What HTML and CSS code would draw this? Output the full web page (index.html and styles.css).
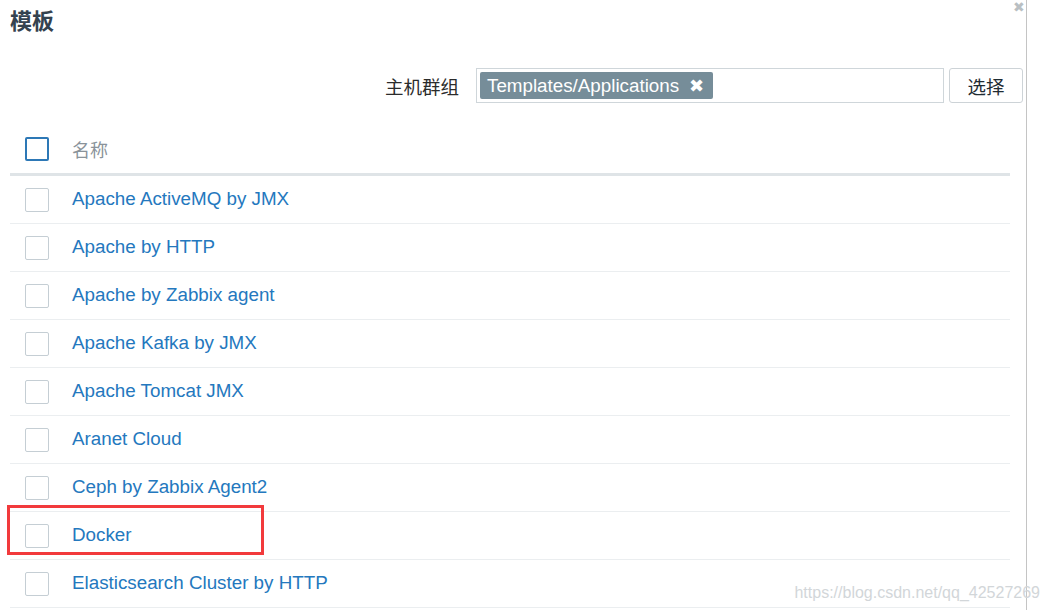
FILE: index.html
```html
<!DOCTYPE html>
<html lang="zh">
<head>
<meta charset="utf-8">
<title>模板</title>
<link rel="stylesheet" href="styles.css">
</head>
<body>
<div class="page">
  <div class="dialog">
    <span class="close">&#x2716;</span>
    <h1 class="title">模板</h1>

    <div class="filter">
      <label class="filter-label">主机群组</label>
      <div class="multiselect">
        <span class="tag">Templates/Applications <span class="tag-x">&#x2716;</span></span>
      </div>
      <button class="btn">选择</button>
    </div>

    <div class="list">
      <div class="row head">
        <span class="check check-head"></span>
        <span class="head-name">名称</span>
      </div>
      <div class="row"><span class="check"></span><a class="link">Apache ActiveMQ by JMX</a></div>
      <div class="row"><span class="check"></span><a class="link">Apache by HTTP</a></div>
      <div class="row"><span class="check"></span><a class="link">Apache by Zabbix agent</a></div>
      <div class="row"><span class="check"></span><a class="link">Apache Kafka by JMX</a></div>
      <div class="row"><span class="check"></span><a class="link">Apache Tomcat JMX</a></div>
      <div class="row"><span class="check"></span><a class="link">Aranet Cloud</a></div>
      <div class="row"><span class="check"></span><a class="link">Ceph by Zabbix Agent2</a></div>
      <div class="row marked"><span class="check"></span><a class="link">Docker</a><span class="highlight"></span></div>
      <div class="row"><span class="check"></span><a class="link">Elasticsearch Cluster by HTTP</a></div>
    </div>
  </div>

  <span class="watermark">https://blog.csdn.net/qq_42527269</span>
</div>
</body>
</html>
```

FILE: styles.css
```css
html, body {
  margin: 0;
  padding: 0;
  background: #ffffff;
}

body {
  font-family: "Liberation Sans", Arial, "Noto Sans CJK SC", sans-serif;
  overflow: hidden;
}

.page {
  position: relative;
  width: 1049px;
  height: 610px;
  overflow: hidden;
}

.dialog {
  position: relative;
  width: 1027px;
  height: 610px;
  border-right: 1px solid #c4c4c4;
  box-sizing: border-box;
  overflow: hidden;
}

.close {
  position: absolute;
  top: 0;
  right: 1px;
  font-size: 14px;
  color: #b9bfc3;
  line-height: 15px;
}

.title {
  margin: 0;
  padding: 9px 0 0 10px;
  font-size: 22px;
  line-height: 26px;
  font-weight: bold;
  color: #34424f;
}

.filter {
  display: flex;
  justify-content: flex-end;
  align-items: center;
  margin-top: 33px;
  padding-right: 3px;
  height: 35px;
}

.filter-label {
  font-size: 18.5px;
  color: #2b2b2b;
  margin-right: 17px;
}

.multiselect {
  box-sizing: border-box;
  width: 468px;
  height: 35px;
  border: 1px solid #cfd6da;
  padding: 3px;
  display: flex;
  align-items: flex-start;
}

.tag {
  display: inline-flex;
  align-items: center;
  height: 27px;
  padding: 0 9px 0 7px;
  background: #768d99;
  color: #ffffff;
  font-size: 18.8px;
  border-radius: 2px;
}

.tag-x {
  margin-left: 10px;
  font-size: 18px;
}

.btn {
  box-sizing: border-box;
  width: 74px;
  height: 35px;
  margin-left: 5px;
  background: #ffffff;
  border: 1px solid #cdd3d7;
  border-radius: 3px;
  font-family: inherit;
  font-size: 18.5px;
  color: #1f2c33;
  padding: 0;
}

.list {
  margin: 22px 0 0 10px;
  width: 1000px;
}

.row {
  position: relative;
  display: flex;
  align-items: center;
  height: 47px;
  padding-left: 15px;
  border-bottom: 1px solid #ebeef0;
}

.row.head {
  height: 48px;
  border-bottom: 3px solid #dfe4e7;
}

.check {
  box-sizing: border-box;
  width: 24px;
  height: 24px;
  border: 1px solid #c5ced4;
  border-radius: 2px;
  margin-right: 23px;
  flex: none;
}

.check-head {
  border: 2px solid #2d78b6;
}

.head-name {
  font-size: 18px;
  color: #8a939a;
}

.link {
  font-size: 18.8px;
  line-height: 20px;
  margin-top: -2px;
  color: #2478be;
}

.highlight {
  position: absolute;
  left: -3px;
  top: -7px;
  width: 257px;
  height: 50px;
  border: 3px solid #f23a3c;
  box-sizing: border-box;
}

.watermark {
  position: absolute;
  right: 9px;
  bottom: 8px;
  font-size: 16px;
  color: #d2d6d9;
}
```
